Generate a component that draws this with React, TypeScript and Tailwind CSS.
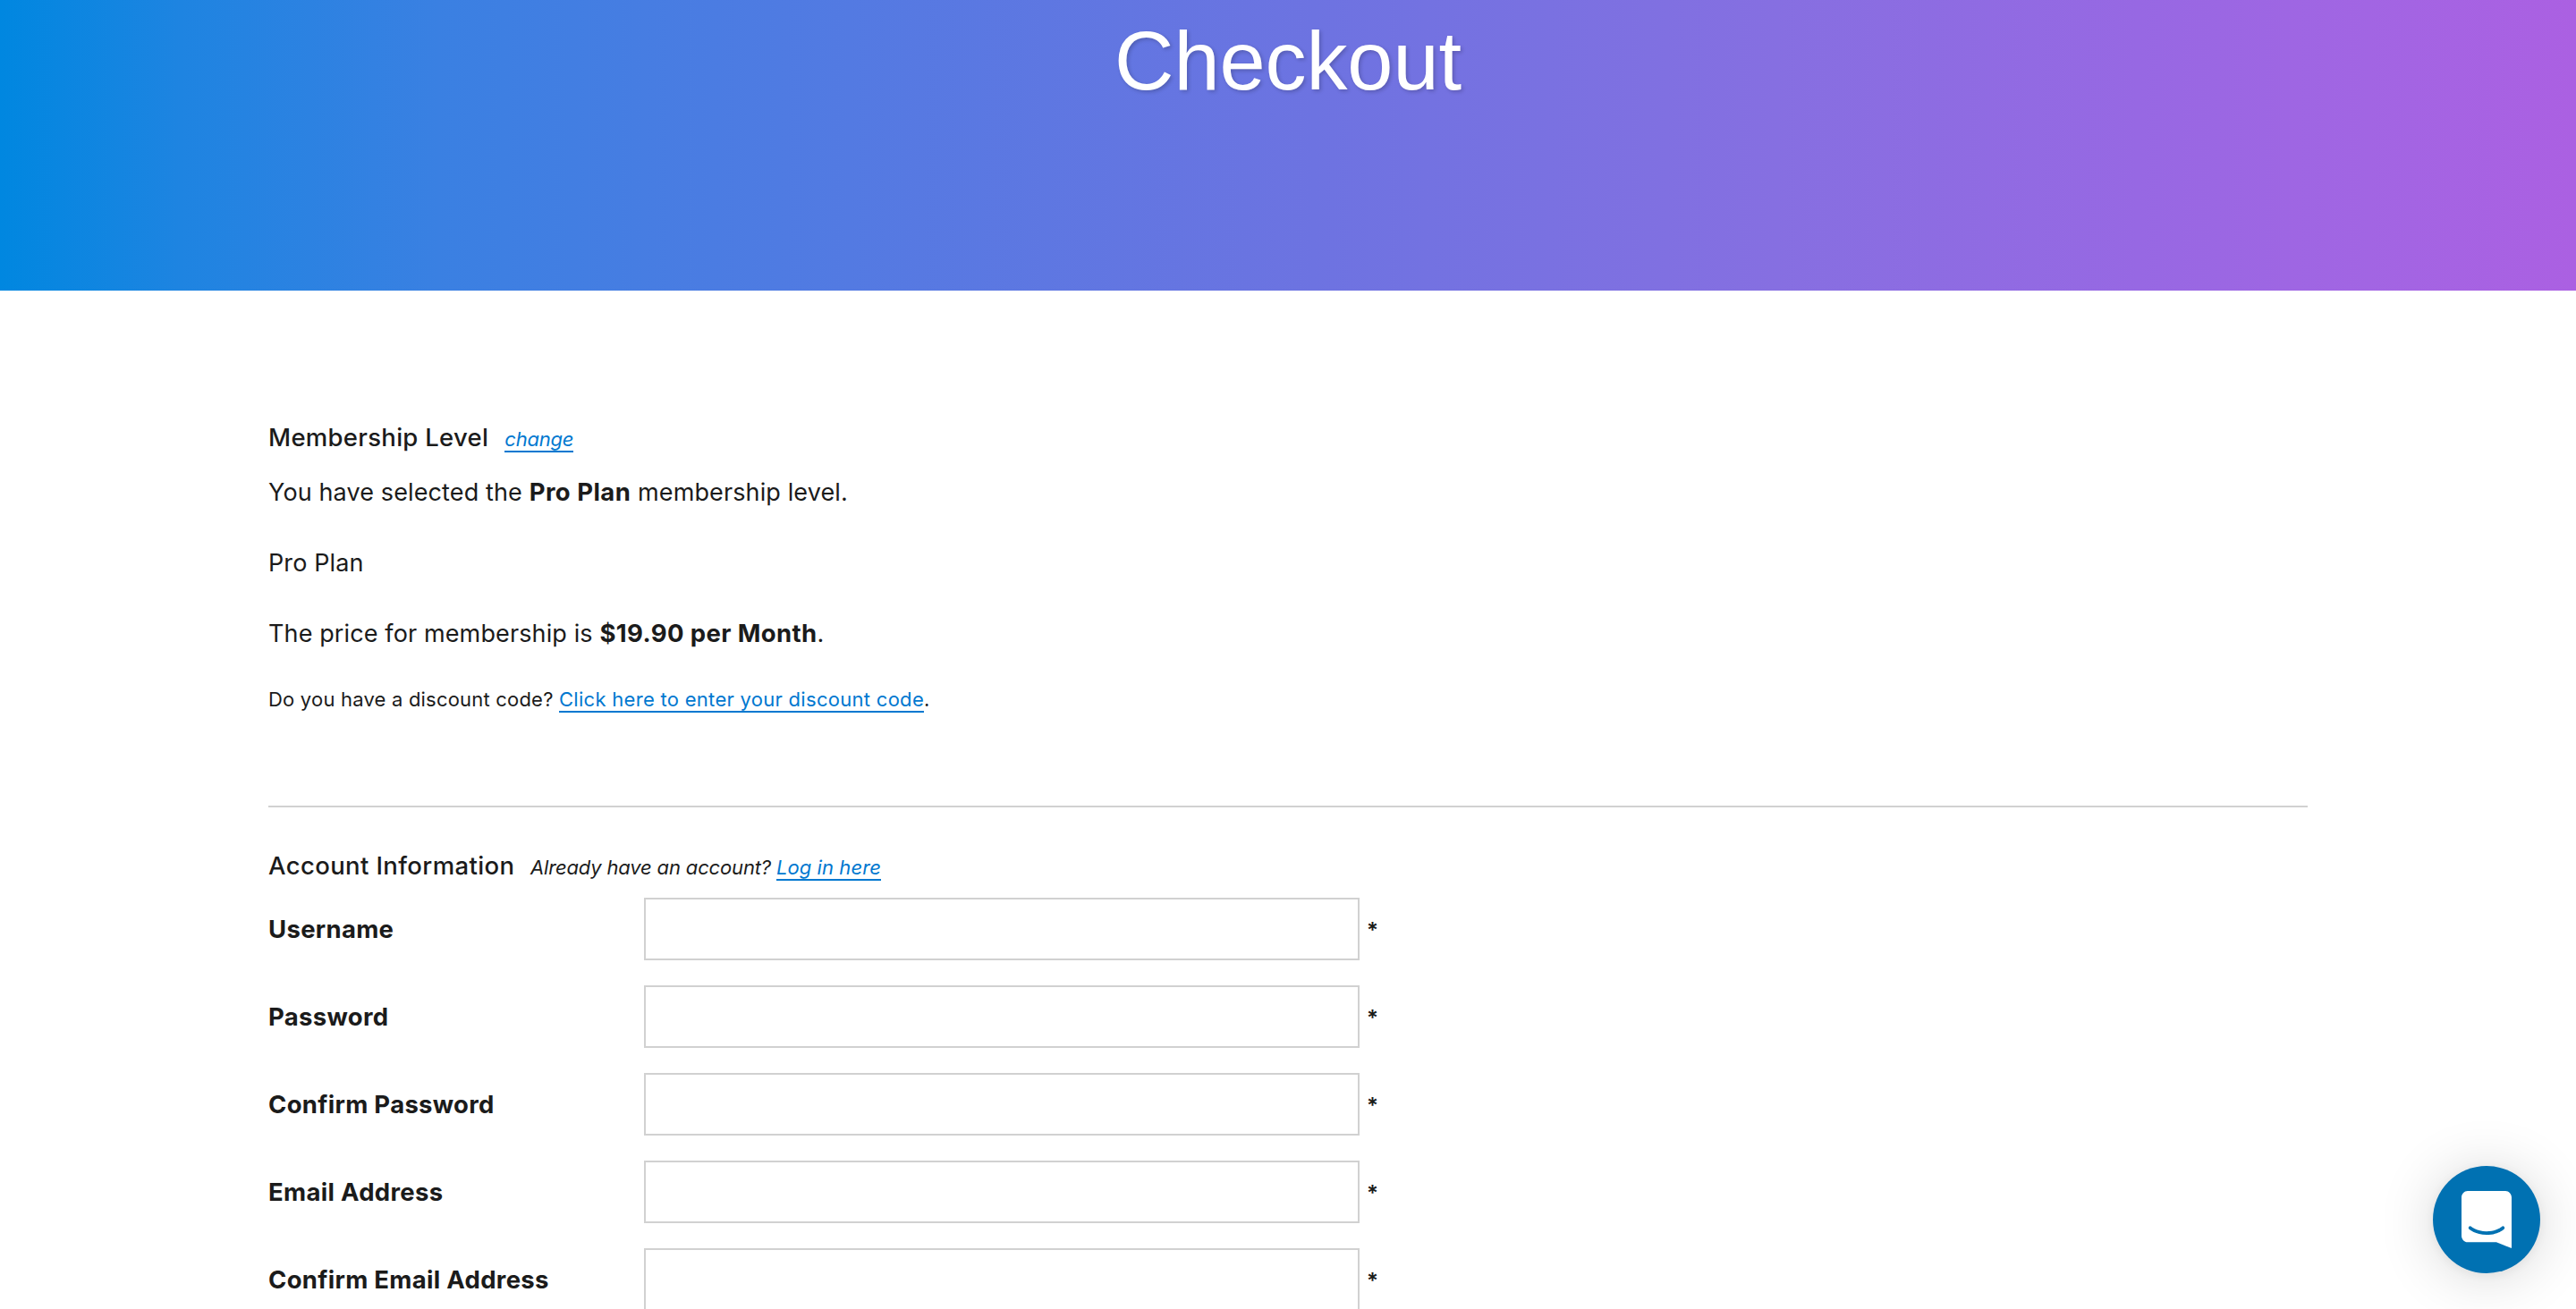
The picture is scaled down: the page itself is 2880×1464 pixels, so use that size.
import type { ReactNode } from 'react';

const FIELDS = [
  { id: 'username', label: 'Username', type: 'text' },
  { id: 'password', label: 'Password', type: 'password' },
  { id: 'password2', label: 'Confirm Password', type: 'password' },
  { id: 'bemail', label: 'Email Address', type: 'email' },
  { id: 'bconfirmemail', label: 'Confirm Email Address', type: 'email' },
];

function TextLink({ children, className = '' }: { children: ReactNode; className?: string }) {
  return (
    <a href="#" className={`text-[#0078d0] border-b-2 border-[#0078d0] ${className}`}>
      {children}
    </a>
  );
}

function Strong({ children, className = '' }: { children: ReactNode; className?: string }) {
  return <strong className={`font-bold text-[27.5px] leading-none ${className}`}>{children}</strong>;
}

function Field({ id, label, type }: { id: string; label: string; type: string }) {
  return (
    <div className="flex items-center h-[70px]">
      <label htmlFor={id} className="w-[420px] pt-0.5 text-[27.5px] tracking-[0.3px] font-bold">
        {label}
      </label>
      <input
        id={id}
        type={type}
        className="w-[800px] h-[70px] px-4 bg-white border-2 border-[#d1d1d1] outline-none"
      />
      <span className="ml-2 pt-[3px] text-[24px] font-semibold">*</span>
    </div>
  );
}

function ChatLauncher() {
  return (
    <button
      aria-label="Open chat"
      className="absolute right-10 bottom-10 w-[120px] h-[120px] rounded-full bg-[#0071b2] flex items-center justify-center shadow-[0_2px_12px_rgba(0,0,0,0.06),0_4px_64px_rgba(0,0,0,0.16)]"
    >
      <svg viewBox="0 0 28 32" className="w-14 h-16 fill-white">
        <path d="M28 32s-4.714-1.855-8.527-3.34H3.437C1.54 28.66 0 27.026 0 25.013V3.644C0 1.633 1.54 0 3.437 0h21.125c1.898 0 3.437 1.632 3.437 3.645v18.404H28V32zm-4.139-11.982a.88.88 0 00-1.292-.105c-.03.026-3.015 2.681-8.57 2.681-5.486 0-8.517-2.636-8.571-2.684a.88.88 0 00-1.29.107 1.01 1.01 0 00-.219.708.992.992 0 00.318.664c.142.128 3.537 3.15 9.762 3.15 6.226 0 9.621-3.022 9.763-3.15a.992.992 0 00.317-.664 1.01 1.01 0 00-.218-.707z" />
      </svg>
    </button>
  );
}

export default function App() {
  return (
    <div className="relative w-full h-[1464px] overflow-hidden bg-white text-[#1b1b1b] font-['Inter',sans-serif]">
      {/* Banner */}
      <header className="h-[325px] pt-[8px] text-center bg-[linear-gradient(90deg,#0087e0_0%,#1e84e1_7%,#3a80e2_17%,#537ae2_33%,#6d73e1_51%,#866fe1_69%,#9768e3_83%,#a265e3_92%,#ab60e2_100%)]">
        <h1 className="font-['Liberation_Sans',sans-serif] text-[92px] leading-[120px] tracking-[-0.1px] text-white [text-shadow:2px_2px_4px_rgba(0,0,0,0.2)]">
          Checkout
        </h1>
      </header>

      <main className="mx-[300px] pt-36">
        {/* Membership level */}
        <section>
          <h2 className="text-[27.5px] leading-10 tracking-[0.29px] font-medium">
            Membership Level
            <span className="ml-[18px] text-[22px] leading-none tracking-[-0.2px] font-normal italic">
              <TextLink>change</TextLink>
            </span>
          </h2>

          <div className="mt-[22px] flex flex-col gap-10 text-[27px] leading-[39px] tracking-[0.12px]">
            <p>
              You have selected the <Strong className="tracking-[0.45px]">Pro Plan</Strong> membership level.
            </p>
            <p>Pro Plan</p>
            <p>
              The price for membership is <Strong className="tracking-[0.38px]">$19.90 per Month</Strong>.
            </p>
          </div>

          <p className="mt-9 text-[22px] leading-9 tracking-[0.2px]">
            Do you have a discount code?{' '}
            <TextLink className="tracking-[0.29px]">Click here to enter your discount code</TextLink>.
          </p>
        </section>

        <hr className="mt-[101px] border-t-2 border-[#d1d1d1]" />

        {/* Account information */}
        <section className="mt-[45px]">
          <h2 className="text-[27.5px] leading-10 tracking-[0.38px] font-medium">
            Account Information
            <span className="ml-[17.5px] text-[22px] leading-none tracking-[-0.16px] font-normal italic">
              Already have an account? <TextLink className="tracking-[0.08px]">Log in here</TextLink>
            </span>
          </h2>

          <div className="mt-4 flex flex-col gap-7">
            {FIELDS.map((field) => (
              <Field key={field.id} {...field} />
            ))}
          </div>
        </section>
      </main>

      <ChatLauncher />
    </div>
  );
}
